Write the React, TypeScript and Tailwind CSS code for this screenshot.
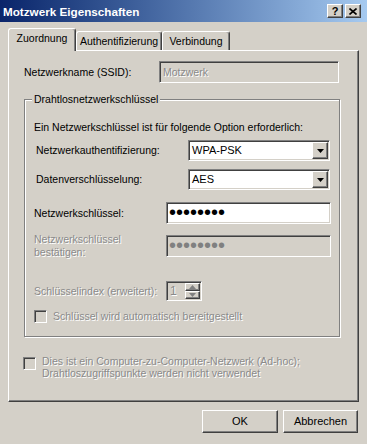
import React from 'react';

const FONT = "font-['Liberation_Sans',Arial,sans-serif]";
const raised =
  'border border-t-white border-l-white border-r-[#404040] border-b-[#404040] shadow-[inset_-1px_-1px_0_#808080]';
const sunken =
  'border border-t-[#808080] border-l-[#808080] border-r-white border-b-white shadow-[inset_1px_1px_0_#404040,inset_-1px_-1px_0_#d4d0c8]';
const grayText = 'text-[#8a8a8a] [text-shadow:1px_1px_0_#ffffff]';

function Arrow({ up = false, color = '#000' }: { up?: boolean; color?: string }) {
  return (
    <svg width="7" height="4" viewBox="0 0 7 4">
      <path d={up ? 'M3.5 0L7 4H0z' : 'M0 0h7L3.5 4z'} fill={color} />
    </svg>
  );
}

function Select({ value }: { value: string }) {
  return (
    <div className={`flex w-[142px] h-[21px] bg-white p-px ${sunken}`}>
      <div className="flex-1 flex items-center pl-[2px] text-[11px]">{value}</div>
      <div className={`w-[16px] h-full flex items-center justify-center bg-[#d4d0c8] ${raised}`}>
        <Arrow />
      </div>
    </div>
  );
}

function Dots({ gray = false }: { gray?: boolean }) {
  return (
    <span className={`text-[20px] leading-none -mt-[2px] ${gray ? 'text-[#808080]' : 'text-black'}`}>
      ••••••••
    </span>
  );
}

function Checkbox() {
  return <div className={`w-[13px] h-[13px] shrink-0 bg-[#d4d0c8] ${sunken}`} />;
}

function Tab({ label, active = false }: { label: string; active?: boolean }) {
  return (
    <div
      className={`flex items-center justify-center rounded-t-[3px] border-t border-l border-t-white border-l-white border-r border-r-[#404040] shadow-[inset_-1px_0_0_#808080] bg-[#d4d0c8] ${
        active ? 'h-[23px] -mb-px relative z-10 pb-[3px]' : 'h-[19px] pt-px'
      }`}
    >
      {label}
    </div>
  );
}

export default function App() {
  return (
    <div className={`w-[367px] h-[444px] bg-[#d4d0c8] overflow-hidden text-[10.5px] leading-[13px] text-black ${FONT}`}>
      {/* title bar */}
      <div className="h-[22px] flex items-center bg-linear-to-r from-[#0a246a] to-[#a6caf0] pl-[3px] pr-[6px]">
        <span className="flex-1 text-white font-bold text-[11.7px]">Motzwerk Eigenschaften</span>
        <div className="flex gap-[2px]">
          <div className={`w-[16px] h-[14px] flex items-center justify-center bg-[#d4d0c8] font-bold text-[11px] leading-none ${raised}`}>
            ?
          </div>
          <div className={`w-[16px] h-[14px] flex items-center justify-center bg-[#d4d0c8] ${raised}`}>
            <svg width="8" height="7" viewBox="0 0 8 7">
              <path d="M0.5 0.5L7.5 6.5M7.5 0.5L0.5 6.5" stroke="#000" strokeWidth="1.6" />
            </svg>
          </div>
        </div>
      </div>

      {/* tabs */}
      <div className="h-[28px] flex items-end pl-[8px]">
        <div className="w-[68px]">
          <Tab label="Zuordnung" active />
        </div>
        <div className="w-[86px]">
          <Tab label="Authentifizierung" />
        </div>
        <div className="w-[68px]">
          <Tab label="Verbindung" />
        </div>
      </div>

      {/* panel */}
      <div className={`ml-[8px] w-[351px] h-[352px] pt-[10px] ${raised}`}>
        <div className="flex items-center h-[22px] pl-[15px]">
          <div className="w-[135px]">Netzwerkname (SSID):</div>
          <div className={`w-[180px] h-[22px] flex items-center pl-[3px] bg-[#d4d0c8] ${sunken}`}>
            <span className={grayText}>Motzwerk</span>
          </div>
        </div>

        {/* group box */}
        <div className="relative mt-[16px] ml-[15px] w-[316px] h-[238px] border border-[#808080] shadow-[inset_1px_1px_0_#ffffff,1px_1px_0_#ffffff] pt-[21px] pl-[9px]">
          <span className="absolute left-[7px] -top-[7px] px-[2px] bg-[#d4d0c8]">Drahtlosnetzwerkschlüssel</span>

          <div className="h-[13px]">Ein Netzwerkschlüssel ist für folgende Option erforderlich:</div>

          <div className="mt-[6px] flex items-center h-[21px]">
            <div className="w-[154px] pl-[2px]">Netzwerkauthentifizierung:</div>
            <Select value="WPA-PSK" />
          </div>
          <div className="mt-[8px] flex items-center h-[21px]">
            <div className="w-[154px] pl-[2px]">Datenverschlüsselung:</div>
            <Select value="AES" />
          </div>

          <div className="mt-[12px] flex items-center h-[22px]">
            <div className="w-[132px]">Netzwerkschlüssel:</div>
            <div className={`w-[165px] h-[22px] flex items-center pl-[2px] bg-white ${sunken}`}>
              <Dots />
            </div>
          </div>
          <div className="mt-[11px] flex items-center h-[22px]">
            <div className={`w-[132px] ${grayText}`}>
              Netzwerkschlüssel
              <br />
              bestätigen:
            </div>
            <div className={`w-[165px] h-[22px] flex items-center pl-[2px] bg-[#d4d0c8] ${sunken}`}>
              <Dots gray />
            </div>
          </div>

          <div className="mt-[24px] flex items-center h-[20px]">
            <div className={`w-[132px] ${grayText}`}>Schlüsselindex (erweitert):</div>
            <div className={`flex w-[36px] h-[20px] bg-[#d4d0c8] p-px ${sunken}`}>
              <div className={`flex-1 flex items-center pl-[2px] text-[12px] ${grayText}`}>1</div>
              <div className="w-[15px] flex flex-col">
                <div className={`flex-1 flex items-center justify-center bg-[#d4d0c8] ${raised}`}>
                  <Arrow up color="#808080" />
                </div>
                <div className={`flex-1 flex items-center justify-center bg-[#d4d0c8] ${raised}`}>
                  <Arrow color="#808080" />
                </div>
              </div>
            </div>
          </div>

          <div className="mt-[9px] flex items-center h-[13px]">
            <Checkbox />
            <span className={`ml-[6px] ${grayText}`}>Schlüssel wird automatisch bereitgestellt</span>
          </div>
        </div>

        {/* ad-hoc */}
        <div className="mt-[18px] ml-[14px] flex items-start">
          <div className="mt-[2px]">
            <Checkbox />
          </div>
          <div className={`ml-[6px] leading-[12px] ${grayText}`}>
            Dies ist ein Computer-zu-Computer-Netzwerk (Ad-hoc);
            <br />
            Drahtloszugriffspunkte werden nicht verwendet
          </div>
        </div>
      </div>

      {/* buttons */}
      <div className="mt-[8px] flex justify-end gap-[5px] pr-[9px]">
        <div className={`w-[76px] h-[23px] flex items-center justify-center bg-[#d4d0c8] text-[11px] ${raised}`}>OK</div>
        <div className={`w-[75px] h-[23px] flex items-center justify-center bg-[#d4d0c8] text-[11px] ${raised}`}>Abbrechen</div>
      </div>
    </div>
  );
}
